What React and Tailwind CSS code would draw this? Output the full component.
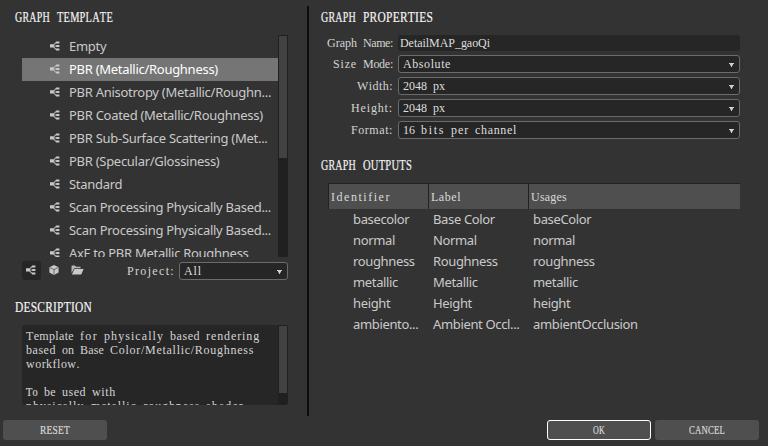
import React from "react";

const templates = [
  "Empty",
  "PBR (Metallic/Roughness)",
  "PBR Anisotropy (Metallic/Roughn...",
  "PBR Coated (Metallic/Roughness)",
  "PBR Sub-Surface Scattering (Met...",
  "PBR (Specular/Glossiness)",
  "Standard",
  "Scan Processing Physically Based...",
  "Scan Processing Physically Based...",
  "AxF to PBR Metallic Roughness",
];

const outputs = [
  ["basecolor", "Base Color", "baseColor"],
  ["normal", "Normal", "normal"],
  ["roughness", "Roughness", "roughness"],
  ["metallic", "Metallic", "metallic"],
  ["height", "Height", "height"],
  ["ambiento...", "Ambient Occl...", "ambientOcclusion"],
];

const properties = [
  ["Size Mode:", "Absolute"],
  ["Width:", "2048 px"],
  ["Height:", "2048 px"],
  ["Format:", "16 bits per channel"],
];

const serif = "font-['Liberation_Serif',serif] text-[12px] whitespace-pre";
const sans = "font-['Noto_Sans',sans-serif] text-[13px] whitespace-pre";

const pen = document.createElement("canvas").getContext("2d");

// Spreads a serif face over fixed cells: every word takes `cell` pixels per character.
// Words much wider than their cells are condensed, the others are letter-spaced.
function Cells({ text, size = 12, cell = 6 }) {
  pen.font = `${size}px "Liberation Serif"`;
  pen.fontKerning = "none";
  return text.split(/(\s+)/).filter(Boolean).map((part, i) => {
    if (part.includes("\n")) return part;
    const natural = pen.measureText(part).width;
    const width = cell * part.length;
    if (natural > width * 1.08) {
      const loose = natural + part.length * 0.3;
      return (
        <span
          key={i}
          className="inline-block origin-left text-left tracking-[0.3px] [font-kerning:none] [-webkit-text-stroke:0.2px_currentColor]"
          style={{ width: `${width}px`, transform: `scaleX(${(width / loose).toFixed(4)})` }}
        >
          {part}
        </span>
      );
    }
    return (
      <span key={i} className="[font-kerning:none] [font-variant-ligatures:none]" style={{ letterSpacing: `${((width - natural) / part.length).toFixed(3)}px` }}>
        {part}
      </span>
    );
  });
}

function GraphIcon({ className = "" }) {
  return (
    <svg width="10" height="10" viewBox="0 0 10 10" className={"shrink-0 " + className} fill="none">
      <path d="M3 5H7M3 4.6L6 1.5H7M3 5.4L6 8.5H7" stroke="#b0b0b0" strokeWidth="1.1" />
      <path d="M0 3.2h3.6v3.4H0zM6 0.4H9.4v2h-3.4zM6.2 4H9.4v2h-3.2zM6 7.6H9.4v2h-3.4z" fill="#c8c8c8" />
    </svg>
  );
}

function CubeIcon() {
  return (
    <svg width="10" height="10" viewBox="0 0 10 10">
      <path d="M5 0L9.6 2.2V7.6L5 10L0.4 7.6V2.2Z" fill="#c8c8c8" />
      <path d="M0.8 2.6L5 4.6L9.2 2.6M5 4.6V9.8" stroke="#555" strokeWidth="0.8" fill="none" />
    </svg>
  );
}

function FolderIcon() {
  return (
    <svg width="13" height="10" viewBox="0 0 13 10">
      <path d="M0.5 8V1.2Q0.5 0.5 1.2 0.5H4L5 1.8H9.5V3.2H3.2Z" fill="#b8b8b8" />
      <path d="M3.4 4H12.6L10.2 9.5H0.9Z" fill="#c8c8c8" />
    </svg>
  );
}

function Heading({ children, className = "" }) {
  return (
    <h2 className={"font-['Liberation_Serif',serif] text-[14px] leading-[18px] whitespace-pre text-[#f4f4f4] " + className}>
      <Cells text={children} size={14} cell={7} />
    </h2>
  );
}

function Select({ value, className = "" }) {
  return (
    <div className={"flex h-[18px] items-center justify-between rounded-[3px] border border-[#6b6b6b] bg-[#262626] pr-[5px] pl-1 text-[#dedede] " + className}>
      <span className={serif + " leading-4"}><Cells text={value} /></span>
      <svg width="5" height="4" viewBox="0 0 5 4" className="mt-[2px]">
        <path d="M0 0H5V1H4V2.5H3V4H2V2.5H1V1H0Z" fill="#d0d0d0" />
      </svg>
    </div>
  );
}

function Field({ label, children, className = "" }) {
  return (
    <div className={"flex items-center " + className}>
      <span className={serif + " w-[85px] text-right leading-4 text-[#d4d4d4]"}><Cells text={label} /></span>
      {children}
    </div>
  );
}

function Button({ children, className = "" }) {
  return (
    <button className={serif + " h-5 w-[104px] rounded-[3px] bg-[#4f4f4f] text-center text-[#dadada] " + className}>
      <Cells text={children} />
    </button>
  );
}

export default function App() {
  return (
    <div className="flex h-[446px] w-[768px] flex-col overflow-hidden bg-[#333333]">
      <div className="flex h-[416px] shrink-0">
        <section className="flex w-[307px] flex-col">
          <Heading className="mt-[9px] ml-[15px]">GRAPH TEMPLATE</Heading>
          <div className="mt-2 ml-[22px] flex h-[222px] w-[266px] overflow-hidden">
            <ul className="w-64">
              {templates.map((name, i) => (
                <li
                  key={i}
                  className={"flex h-[23px] items-center pl-7 " + (i === 1 ? "bg-[#757575] text-white" : "text-[#cacaca]")}
                >
                  <GraphIcon className="mb-[1px]" />
                  <span className={sans + " ml-[9px] leading-[23px] tracking-[-0.28px]"}>{name}</span>
                </li>
              ))}
            </ul>
            <div className="w-[10px] bg-[#202020] p-px">
              <div className="h-[122px] bg-[#424242]" />
            </div>
          </div>
          <div className="mt-1 ml-[22px] flex h-[19px] w-[266px] items-center">
            <div className="flex h-[19px] w-[19px] items-center justify-center rounded-[3px] bg-[#262626]">
              <GraphIcon className="mr-px mb-px" />
            </div>
            <div className="-mt-px ml-2"><CubeIcon /></div>
            <div className="-mt-px ml-[12px]"><FolderIcon /></div>
            <span className={serif + " mr-[4px] ml-auto leading-4 text-[#d4d4d4]"}><Cells text="Project:" /></span>
            <Select value="All" className="w-[109px]" />
          </div>
          <Heading className="mt-[19px] ml-[15px]">DESCRIPTION</Heading>
          <div className="mt-2 ml-[22px] flex h-20 w-[266px] overflow-hidden rounded-[3px] bg-[#262626]">
            <p className={serif + " w-64 pt-1 pl-1 leading-[14px] text-[#d4d4d4]"}>
              <Cells text={"Template for physically based rendering\nbased on Base Color/Metallic/Roughness\nworkflow.\n\nTo be used with\nphysically_metallic_roughness shader."} />
            </p>
            <div className="h-20 w-[10px] bg-[#202020] p-px">
              <div className="h-[67px] bg-[#424242]" />
            </div>
          </div>
        </section>

        <div className="mt-[6px] h-[410px] w-[2px] bg-[#0c0c0c]" />

        <section className="ml-3 flex w-[419px] flex-col">
          <Heading className="mt-[9px]">GRAPH PROPERTIES</Heading>
          <div className="mt-2 -ml-[13px] flex flex-col">
            <Field label="Graph Name:" className="h-4">
              <div className="ml-[5px] flex h-4 w-[342px] items-center rounded-[3px] bg-[#262626] pl-[2px] text-[#dedede]">
                <span className={serif + " leading-4"}><Cells text="DetailMAP_gaoQi" /></span>
              </div>
            </Field>
            <div className="mt-1 flex flex-col gap-1">
              {properties.map(([label, value]) => (
                <Field key={label} label={label}>
                  <Select value={value} className="ml-[5px] w-[342px]" />
                </Field>
              ))}
            </div>
          </div>
          <Heading className="mt-[18px]">GRAPH OUTPUTS</Heading>
          <div className="mt-2 ml-[7px] w-[412px]">
            <div className={serif + " grid h-[26px] grid-cols-[100px_100px_212px] border-t border-[#222] bg-[#4f4f4f] leading-[27px] text-[#dadada]"}>
              {["Identifier", "Label", "Usages"].map((title) => (
                <span key={title} className="h-[25px] border-l border-[#222] pl-[2px]"><Cells text={title} /></span>
              ))}
            </div>
            {outputs.map((row) => (
              <div key={row[0]} className={sans + " grid h-[21px] grid-cols-[100px_100px_212px] leading-[21px] tracking-[-0.35px] text-[#cacaca]"}>
                <span className="pl-[25px]">{row[0]}</span>
                <span className="pl-[5px]">{row[1]}</span>
                <span className="pl-[5px]">{row[2]}</span>
              </div>
            ))}
          </div>
        </section>
      </div>
      <footer className="mt-1 flex pl-[3px]">
        <Button>RESET</Button>
        <Button className="ml-[440px] border border-white">OK</Button>
        <Button className="ml-1">CANCEL</Button>
      </footer>
    </div>
  );
}
